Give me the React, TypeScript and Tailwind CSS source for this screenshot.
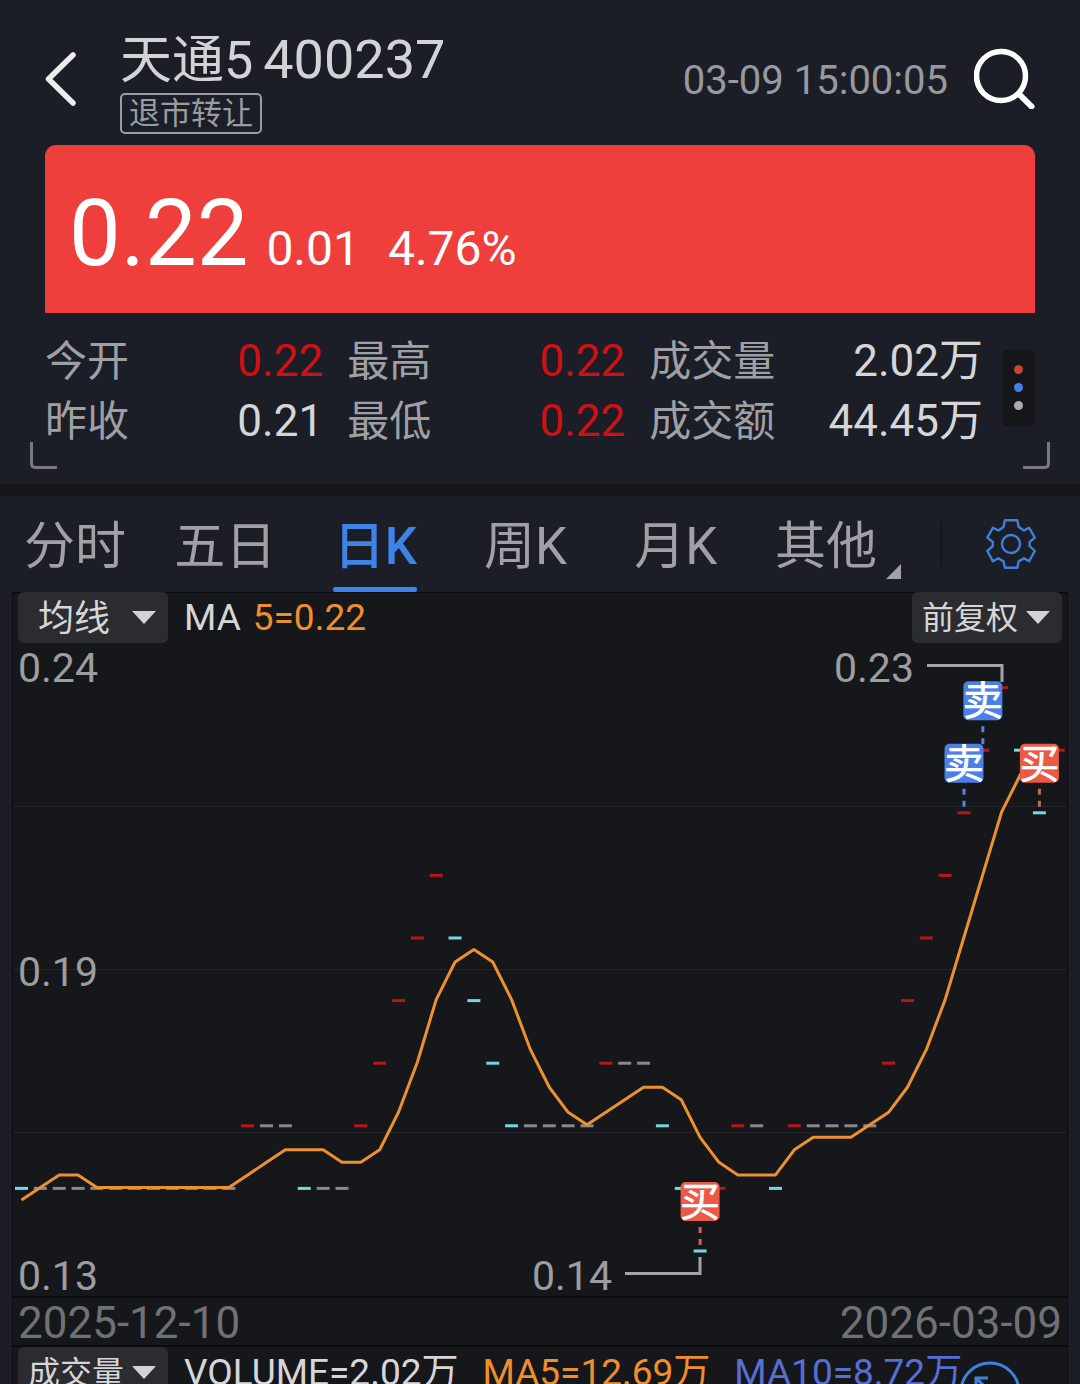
import React, { useState } from "react";

type Candle = { price: number; color: string };

const RED = "#b8161a";
const CYAN = "#74d9dd";
const FLAT = "#868893";

const STEP_X = 18.85;
const STEP_Y = 62.6;

// closing prices in cents
const closes = [
  15, 15, 15, 15, 15, 15, 15, 15, 15, 15, 15, 15, 16, 16, 16, 15, 15, 15, 16,
  17, 18, 19, 20, 19, 18, 17, 16, 16, 16, 16, 16, 17, 17, 17, 16, 15, 14, 15,
  16, 16, 15, 16, 16, 16, 16, 16, 17, 18, 19, 20, 21, 22, 23, 22, 21, 22,
];
// the days before the first one on screen, needed for MA5
const earlier = [14, 14, 15, 16];

const toX = (i: number) => 8.5 + i * STEP_X;
const toY = (cents: number) => 608 - (cents - 14) * STEP_Y;

const all = [...earlier, ...closes];

const candles: Candle[] = closes.map((price, i) => {
  const prev = all[i + 3];
  return { price, color: price > prev ? RED : price < prev ? CYAN : FLAT };
});

const ma5 = closes
  .map((_, i) => {
    const avg = all.slice(i, i + 5).reduce((a, b) => a + b, 0) / 5;
    return `${toX(i)},${toY(avg) - 1}`;
  })
  .join(" ");

const trades = [
  { day: 36, side: "买" },
  { day: 51, side: "卖" },
  { day: 50, side: "卖" },
  { day: 54, side: "买" },
];

const stats = [
  { label: "今开", value: "0.22", up: true },
  { label: "最高", value: "0.22", up: true },
  { label: "成交量", value: "2.02万", up: false },
  { label: "昨收", value: "0.21", up: false },
  { label: "最低", value: "0.22", up: true },
  { label: "成交额", value: "44.45万", up: false },
];

const tabs = ["分时", "五日", "日K", "周K", "月K", "其他"];

const Header = () => (
  <header className="flex h-[145px] items-center pl-[45px] pr-[45px]">
    <button aria-label="返回" className="mt-3 w-[75px] shrink-0">
      <svg width="31" height="54" viewBox="0 0 31 54" fill="none">
        <path
          d="M28 3 L3.5 27 L28 51"
          stroke="#ececee"
          strokeWidth="5.5"
          strokeLinecap="round"
          strokeLinejoin="round"
        />
      </svg>
    </button>
    <div className="flex flex-1 flex-col items-start pt-4">
      <h1 className="flex items-baseline gap-[10px] whitespace-nowrap leading-[64px] text-[#d3d3d5]">
        <span className="text-[52px]">天通5</span>
        <span className="text-[54px]">400237</span>
      </h1>
      <span className="flex h-[41px] items-center rounded-[5px] border-2 border-[#9a9ca3] px-[7px] text-[31px] leading-none text-[#9a9ca3]">
        退市转让
      </span>
    </div>
    <time className="mr-[26px] mt-4 whitespace-nowrap text-[40px] leading-none text-[#98999f]">
      03-09 15:00:05
    </time>
    <button aria-label="搜索" className="mt-3 shrink-0">
      <svg width="61" height="61" viewBox="0 0 61 61" fill="none" stroke="#fff">
        <circle cx="27" cy="28" r="24.5" strokeWidth="5.5" />
        <path d="M45 46 L57.5 58.5" strokeWidth="6" strokeLinecap="round" />
      </svg>
    </button>
  </header>
);

const Quote = () => (
  <section className="relative pb-[33px]">
    <div className="mx-[45px] flex h-[168px] items-baseline rounded-t-[11px] bg-[#ef3f3c] pl-6 text-white">
      <span className="text-[92px] leading-[178px]">0.22</span>
      <span className="ml-[18px] text-[48px]">0.01</span>
      <span className="ml-[28px] text-[48px]">4.76%</span>
    </div>
    <div className="mx-[45px] mt-[18px] flex items-center gap-[19px]">
      <dl className="grid flex-1 grid-cols-[5fr_5fr_6fr] gap-x-6">
        {stats.map((s) => (
          <div
            key={s.label}
            className="flex h-[60px] items-baseline justify-between whitespace-nowrap leading-[60px]"
          >
            <dt className="text-[42px] text-[#9fa0a4]">{s.label}</dt>
            <dd
              className={
                s.up ? "text-[44px] text-[#cf1113]" : "text-[44px] text-[#d6d6d8]"
              }
            >
              {s.value}
            </dd>
          </div>
        ))}
      </dl>
      <button
        aria-label="更多"
        className="mb-[7px] flex h-[76px] w-[33px] flex-col items-center justify-center gap-[9px] rounded-[5px] bg-[#15161a]"
      >
        <span className="size-[9px] rounded-full bg-[#c9452f]" />
        <span className="size-[9px] rounded-full bg-[#3f83e8]" />
        <span className="size-[9px] rounded-full bg-[#adadb1]" />
      </button>
    </div>
    <span className="absolute bottom-[15px] left-[30px] size-[27px] rounded-bl-[5px] border-b-3 border-l-3 border-[#77797f]" />
    <span className="absolute bottom-[15px] right-[30px] size-[27px] rounded-br-[5px] border-b-3 border-r-3 border-[#77797f]" />
  </section>
);

const Gear = () => (
  <svg
    width="50"
    height="50"
    viewBox="0 0 50 50"
    fill="none"
    stroke="#3f7fdc"
    strokeWidth="2.4"
    strokeLinejoin="round"
  >
    <path d="M18.9 1.3H31.3L32.7 8L38 11.5L43 8.7L48.8 18.6L43.6 23V27L48.8 32L43 42.3L38 39.3L32.7 42.4L31.3 48.8H18.9L17.5 42.4L12.4 39.3L7 42.3L1.3 32L6.8 27V23L1.3 18.6L7 8.7L12.4 11.5L17.5 8Z" />
    <circle cx="25" cy="25" r="9" />
  </svg>
);

const Tabs = () => {
  const [active, setActive] = useState("日K");

  return (
    <nav className="flex h-24 items-stretch">
      <div className="grid flex-1 grid-cols-6">
        {tabs.map((tab) => (
          <button
            key={tab}
            onClick={() => setActive(tab)}
            className={
              tab === active
                ? "relative pt-1 text-[51px] leading-none font-medium text-[#3f83e8]"
                : "relative pt-1 text-[51px] leading-none text-[#a0a1a4]"
            }
          >
            {tab}
            {tab === active && (
              <span className="absolute bottom-0 left-1/2 h-[5px] w-[84px] -translate-x-1/2 rounded-[2px] bg-[#3f83e8]" />
            )}
            {tab === "其他" && (
              <svg className="absolute bottom-[13px] right-0" width="15" height="15">
                <path d="M15 0V15H0Z" fill="#a0a1a4" />
              </svg>
            )}
          </button>
        ))}
      </div>
      <div className="flex w-[179px] items-center justify-between pl-[39px] pr-[44px]">
        <span className="h-[46px] w-[2px] bg-[#15171c]" />
        <button aria-label="设置">
          <Gear />
        </button>
      </div>
    </nav>
  );
};

type PickerProps = { label: string; options: string[]; size: string };

const Picker = ({ label, options, size }: PickerProps) => (
  <div className="relative h-[51px] w-[150px] shrink-0">
    <select
      aria-label={label}
      className={`block h-[51px] w-full appearance-none rounded-[6px] bg-[#2b2c30] text-[#d6d6d8] ${size}`}
    >
      {options.map((o) => (
        <option key={o}>{o}</option>
      ))}
    </select>
    <svg
      className="pointer-events-none absolute right-3 top-[19px]"
      width="24"
      height="13"
    >
      <path d="M0 0H24L12 13Z" fill="#d3d3d5" />
    </svg>
  </div>
);

const Plot = () => (
  <svg viewBox="0 0 1054 653" className="block w-full overflow-visible">
    {[163, 326, 489].map((y) => (
      <path key={y} d={`M0 ${y + 0.5}H1054`} stroke="#222429" />
    ))}
    <g fill="#9d9da0" fontSize="41">
      <text x="5" y="39">0.24</text>
      <text x="5" y="343">0.19</text>
      <text x="5" y="647">0.13</text>
      <text x="821" y="39">0.23</text>
      <text x="519" y="647">0.14</text>
    </g>
    <g fill="none" stroke="#a4a4a7" strokeWidth="3">
      <path d="M914 22.5H989V39" />
      <path d="M612 630.5H687V614" />
    </g>
    {candles.map((c, i) => (
      <rect
        key={i}
        x={toX(i) - 6.5}
        y={toY(c.price) - 1.5}
        width="13"
        height="3"
        fill={c.color}
      />
    ))}
    <polyline
      points={ma5}
      fill="none"
      stroke="#ec9030"
      strokeWidth="3"
      strokeLinejoin="round"
    />
    {trades.map((t) => {
      const x = toX(t.day);
      const y = toY(closes[t.day]);
      const buy = t.side === "买";
      return (
        <g key={t.day}>
          <path
            d={`M${x} ${y - 24}V${y - 6}`}
            stroke={buy ? "#c9665a" : "#5a82dc"}
            strokeWidth="3"
            strokeDasharray="6 6"
          />
          <rect
            x={x - 19.5}
            y={y - 69}
            width="39"
            height="39"
            rx="5"
            fill={buy ? "#ea5a47" : "#4d7fe8"}
          />
          <text
            x={x}
            y={y - 35}
            textAnchor="middle"
            fontSize="40"
            fill="#fff"
            stroke="#fff"
            strokeWidth="0.6"
          >
            {t.side}
          </text>
        </g>
      );
    })}
  </svg>
);

const App = () => {
  return (
    <main className="h-screen overflow-hidden bg-[#1b1e26] font-[Roboto,'Noto_Sans_CJK_SC',sans-serif]">
      <Header />
      <Quote />
      <div className="h-3 bg-[#15161a]" />
      <Tabs />
      <section className="mx-3 border-x border-[#0a0b0e] bg-[#15171b]">
        <div className="flex h-[51px] items-center px-[5px] text-[37px] shadow-[inset_0_1px_0_#0a0b0e]">
          <Picker
            label="主图指标"
            options={["均线", "BOLL"]}
            size="pl-5 text-[36px]"
          />
          <span className="ml-4 text-[#d6d6d8]">MA</span>
          <span className="ml-3 flex-1 text-[#ee8f2c]">5=0.22</span>
          <Picker
            label="复权方式"
            options={["前复权", "后复权", "不复权"]}
            size="pl-[10px] text-[32px]"
          />
        </div>
        <Plot />
        <div className="flex h-[51px] items-center justify-between border-y-2 border-[#0a0b0e] px-[5px] pt-[2px] text-[44px] leading-none text-[#707175]">
          <span>2025-12-10</span>
          <span>2026-03-09</span>
        </div>
        <div className="relative flex h-[51px] items-center whitespace-nowrap px-[5px] text-[37px]">
          <Picker
            label="副图指标"
            options={["成交量", "MACD", "KDJ"]}
            size="pl-[10px] text-[32px]"
          />
          <span className="ml-4 text-[#d6d6d8]">VOLUME=2.02万</span>
          <span className="ml-6 text-[#ee8f2c]">MA5=12.69万</span>
          <span className="ml-6 text-[#5570d2]">MA10=8.72万</span>
          <button
            aria-label="全屏"
            className="absolute right-[46px] top-[14px]"
          >
            <svg
              width="62"
              height="62"
              viewBox="0 0 62 62"
              fill="none"
              stroke="#3f83e0"
              strokeWidth="3"
            >
              <circle cx="31" cy="31" r="29" />
              <path d="M17 29V17H29M17 17L44 44M45 33V45H33" />
            </svg>
          </button>
        </div>
      </section>
    </main>
  );
};

export default App;
